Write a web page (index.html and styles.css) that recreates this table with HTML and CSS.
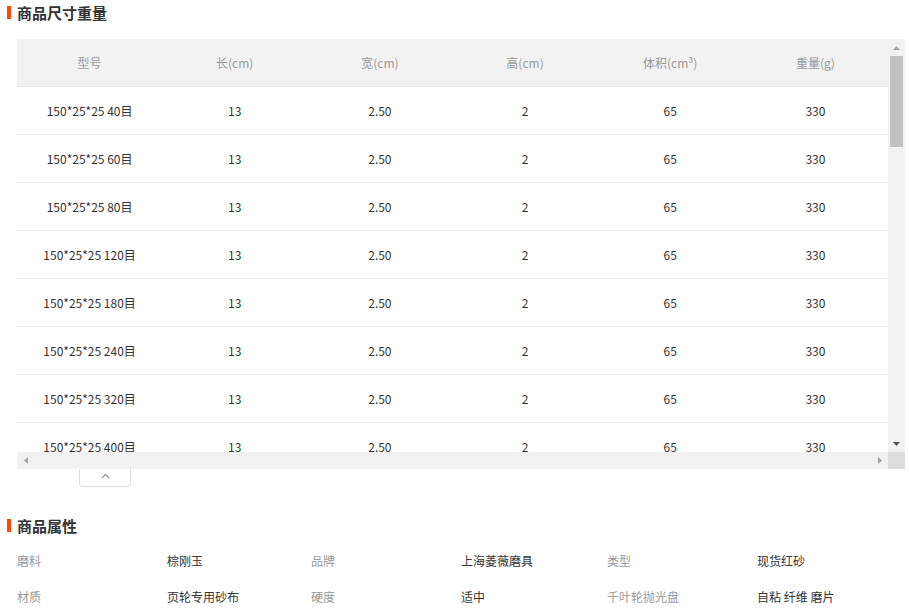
FILE: index.html
```html
<!DOCTYPE html>
<html lang="zh-CN">
<head>
<meta charset="utf-8">
<title>商品尺寸重量</title>
<link rel="stylesheet" href="styles.css">
</head>
<body>
<section class="block">
  <h2 class="sec-title"><span class="bar"></span>商品尺寸重量</h2>
  <div class="table-frame">
    <div class="table-view">
      <table class="size-table">
        <thead>
          <tr><th>型号</th><th>长(cm)</th><th>宽(cm)</th><th>高(cm)</th><th>体积(cm³)</th><th>重量(g)</th></tr>
        </thead>
        <tbody>
          <tr><td>150*25*25 40目</td><td>13</td><td>2.50</td><td>2</td><td>65</td><td>330</td></tr>
          <tr><td>150*25*25 60目</td><td>13</td><td>2.50</td><td>2</td><td>65</td><td>330</td></tr>
          <tr><td>150*25*25 80目</td><td>13</td><td>2.50</td><td>2</td><td>65</td><td>330</td></tr>
          <tr><td>150*25*25 120目</td><td>13</td><td>2.50</td><td>2</td><td>65</td><td>330</td></tr>
          <tr><td>150*25*25 180目</td><td>13</td><td>2.50</td><td>2</td><td>65</td><td>330</td></tr>
          <tr><td>150*25*25 240目</td><td>13</td><td>2.50</td><td>2</td><td>65</td><td>330</td></tr>
          <tr><td>150*25*25 320目</td><td>13</td><td>2.50</td><td>2</td><td>65</td><td>330</td></tr>
          <tr><td>150*25*25 400目</td><td>13</td><td>2.50</td><td>2</td><td>65</td><td>330</td></tr>
        </tbody>
      </table>
    </div>
    <div class="vbar" aria-hidden="true">
      <div class="sb-btn">
        <svg width="7" height="4" viewBox="0 0 7 4"><path d="M0 4 L3.5 0 L7 4 Z" fill="#a3a3a3"/></svg>
      </div>
      <div class="vtrack"><div class="vthumb"></div></div>
      <div class="sb-btn">
        <svg width="7" height="4" viewBox="0 0 7 4"><path d="M0 0 L3.5 4 L7 0 Z" fill="#505050"/></svg>
      </div>
    </div>
    <div class="hbar" aria-hidden="true">
      <div class="sb-btn">
        <svg width="4" height="7" viewBox="0 0 4 7"><path d="M4 0 L0 3.5 L4 7 Z" fill="#a3a3a3"/></svg>
      </div>
      <div class="htrack"></div>
      <div class="sb-btn">
        <svg width="4" height="7" viewBox="0 0 4 7"><path d="M0 0 L4 3.5 L0 7 Z" fill="#a3a3a3"/></svg>
      </div>
    </div>
    <div class="corner"></div>
  </div>
  <button class="collapse" type="button" aria-label="收起">
    <svg width="9" height="6" viewBox="0 0 9 6"><path d="M1 5 L4.5 1.5 L8 5" fill="none" stroke="#999" stroke-width="1.3"/></svg>
  </button>
</section>

<section class="block attrs-block">
  <h2 class="sec-title"><span class="bar"></span>商品属性</h2>
  <dl class="attrs">
    <dt>磨料</dt><dd>棕刚玉</dd>
    <dt>品牌</dt><dd>上海菱薇磨具</dd>
    <dt>类型</dt><dd>现货红砂</dd>
    <dt>材质</dt><dd>页轮专用砂布</dd>
    <dt>硬度</dt><dd>适中</dd>
    <dt>千叶轮抛光盘</dt><dd>自粘 纤维 磨片</dd>
  </dl>
</section>
</body>
</html>
```

FILE: styles.css
```css
html, body {
  margin: 0;
  padding: 0;
  background: #fff;
}
body {
  font-family: "Noto Sans CJK SC", "Liberation Sans", sans-serif;
  color: #333;
  font-size: 12px;
}
.block {
  padding-left: 7px;
}
.sec-title {
  margin: 0;
  padding-top: 2px;
  height: 21px;
  line-height: 21px;
  font-size: 15px;
  font-weight: bold;
  color: #333;
  display: flex;
  align-items: center;
  gap: 6px;
}
.bar {
  display: block;
  width: 4px;
  height: 13px;
  background: #ff4a00;
}
.table-frame {
  margin-top: 16px;
  margin-left: 10px;
  width: 888px;
  display: grid;
  grid-template-columns: 871px 17px;
  grid-template-rows: 413px 17px;
}
.table-view {
  overflow: hidden;
}
.size-table {
  width: 100%;
  table-layout: fixed;
  border-collapse: collapse;
}
.size-table th {
  height: 47px;
  padding: 0;
  background: #f2f2f2;
  color: #999;
  font-weight: normal;
  font-size: 12px;
  border-bottom: 1px solid #e8e8e8;
  text-align: center;
}
.size-table td {
  height: 47px;
  padding: 0;
  text-align: center;
  color: #333;
  border-bottom: 1px solid #ebebeb;
  white-space: nowrap;
}
.vbar {
  background: #f1f1f1;
  display: flex;
  flex-direction: column;
}
.hbar {
  background: #f1f1f1;
  display: flex;
}
.sb-btn {
  flex: 0 0 17px;
  width: 17px;
  height: 17px;
  display: flex;
  align-items: center;
  justify-content: center;
}
.vtrack {
  flex: 1;
  padding: 0 2px;
}
.vthumb {
  height: 91px;
  background: #c1c1c1;
}
.htrack {
  flex: 1;
}
.corner {
  background: #dcdcdc;
}
.collapse {
  display: flex;
  align-items: flex-start;
  justify-content: center;
  margin: 0 0 0 72px;
  padding: 4px 0 0;
  width: 52px;
  height: 18px;
  background: #fff;
  border: 1px solid #ddd;
  border-top: none;
  border-radius: 0 0 4px 4px;
  box-sizing: border-box;
}
.attrs-block {
  margin-top: 26px;
}
.attrs {
  margin: 6px 0 0 10px;
  display: grid;
  grid-template-columns: 150px 144px 150px 146px 150px auto;
  grid-auto-rows: 36px;
  align-items: center;
}
.attrs dt {
  color: #999;
  margin: 0;
}
.attrs dd {
  color: #333;
  margin: 0;
}
```
